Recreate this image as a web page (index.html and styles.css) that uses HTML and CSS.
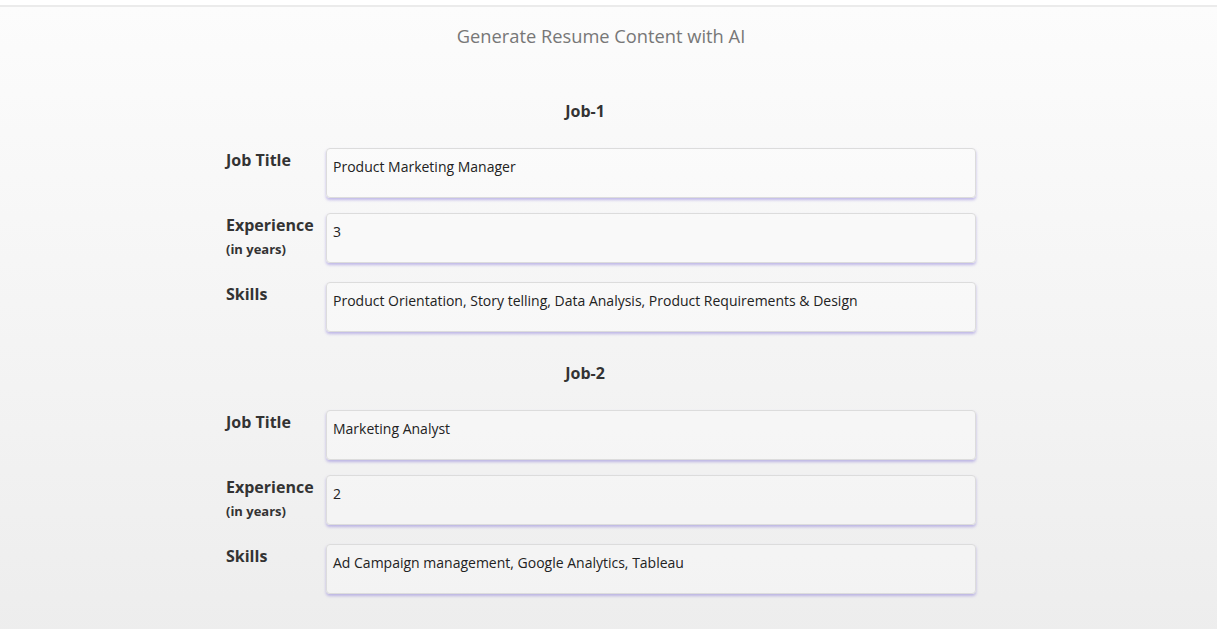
FILE: index.html
```html
<!DOCTYPE html>
<html lang="en">
<head>
    <meta charset="UTF-8">
    <meta name="viewport" content="width=device-width, initial-scale=1.0">
    <title>Generate Resume Content with AI</title>
    <link rel="stylesheet" href="styles.css">
</head>
<body>
    <div class="topbar"></div>

    <div class="page">
        <h1 class="page-title">Generate Resume Content with AI</h1>

        <div class="job">
            <h2 class="job-heading">Job-1</h2>
            <div class="field">
                <label class="field-label">Job Title</label>
                <textarea class="field-input" readonly>Product Marketing Manager</textarea>
            </div>
            <div class="field">
                <label class="field-label">Experience<span class="field-sub">(in years)</span></label>
                <textarea class="field-input" readonly>3</textarea>
            </div>
            <div class="field">
                <label class="field-label">Skills</label>
                <textarea class="field-input" readonly>Product Orientation, Story telling, Data Analysis, Product Requirements &amp; Design</textarea>
            </div>
        </div>

        <div class="job">
            <h2 class="job-heading">Job-2</h2>
            <div class="field">
                <label class="field-label">Job Title</label>
                <textarea class="field-input" readonly>Marketing Analyst</textarea>
            </div>
            <div class="field">
                <label class="field-label">Experience<span class="field-sub">(in years)</span></label>
                <textarea class="field-input" readonly>2</textarea>
            </div>
            <div class="field">
                <label class="field-label">Skills</label>
                <textarea class="field-input" readonly>Ad Campaign management, Google Analytics, Tableau</textarea>
            </div>
        </div>
    </div>
</body>
</html>
```

FILE: styles.css
```css
/* General Styles */
html, body {
    height: 100%;
}

body {
    font-family: "Open Sans", "Noto Sans", sans-serif;
    margin: 0;
    padding: 0;
    color: #333333;
    background: #ffffff;
    display: flex;
    flex-direction: column;
}

.topbar {
    flex-shrink: 0;
    height: 5px;
    background-color: #ffffff;
    border-bottom: 2px solid #ebebeb;
}

.page {
    flex: 1 0 auto;
    background: linear-gradient(to bottom, #fcfcfc 0%, #ededed 100%);
    padding: 0 0 30px;
}

.page-title {
    margin: 16px 0 0;
    padding-right: 15px;
    font-size: 18.3px;
    font-weight: 400;
    color: #777777;
    text-align: center;
    line-height: 26px;
}

/* Job sections */
.job {
    width: 750px;
    margin: 0 auto;
    padding-right: 15px;
}

.job-heading {
    margin: 50px 0 25px;
    padding-right: 32px;
    font-size: 16px;
    font-weight: 700;
    text-align: center;
    color: #333333;
    line-height: 24px;
}

.job + .job .job-heading {
    margin-top: 29px;
}

.field {
    display: flex;
    align-items: flex-start;
    margin-bottom: 15px;
}

.field-label {
    width: 100px;
    flex-shrink: 0;
    font-size: 16px;
    font-weight: 700;
    color: #333333;
    line-height: 22px;
    padding-top: 1px;
}

.field-sub {
    display: block;
    margin-top: 2px;
    padding-bottom: 7px;
    font-size: 13px;
    line-height: 22px;
}

.field-input {
    width: 650px;
    height: 50px;
    box-sizing: border-box;
    margin: 0;
    padding: 7px 6px 6px;
    border: 1px solid #dcdcdc;
    border-radius: 4px;
    background-color: rgba(255, 255, 255, 0.3);
    box-shadow: 0 2px 3px rgba(110, 90, 210, 0.4);
    font-family: inherit;
    font-size: 14px;
    line-height: 22px;
    color: #222222;
    resize: none;
    outline: none;
    overflow: hidden;
}
```
